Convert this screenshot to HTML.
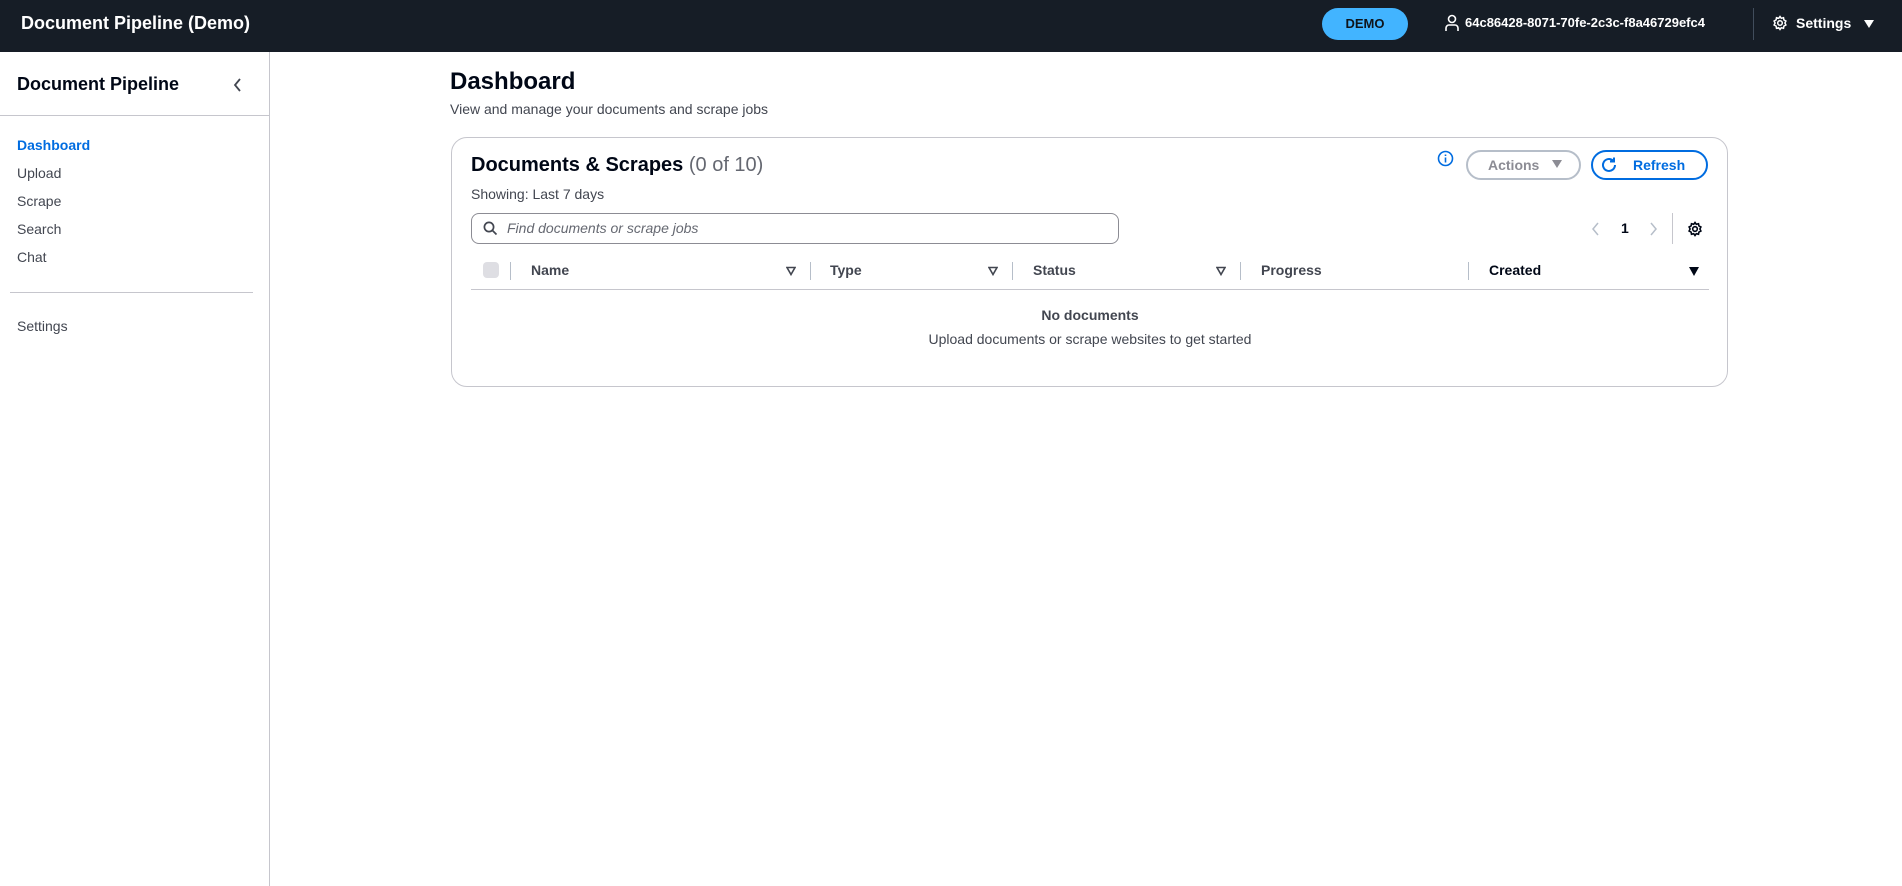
<!DOCTYPE html>
<html><head><meta charset="utf-8"><style>
*{box-sizing:border-box;margin:0;padding:0}
body{width:1902px;height:886px;overflow:hidden;background:#fff;font-family:"Liberation Sans",sans-serif;font-size:14px;color:#000716;position:relative}
.a{position:absolute;white-space:nowrap}
.top{position:absolute;left:0;top:0;width:1902px;height:52px;background:#161d26}
.hd{font-weight:bold}
.sep{position:absolute;width:1px;height:18px;background:#b6bec9;top:262px}
.tri{position:absolute;top:266px;width:0;height:0;border-left:5px solid transparent;border-right:5px solid transparent;border-top:8px solid #424650}
.tri.o{border-top-color:#424650}
</style></head><body>
<div class="top"></div>
<div class="a hd" style="left:21px;top:13px;font-size:18px;color:#fff">Document Pipeline (Demo)</div>
<div class="a" style="left:1322px;top:8px;width:86px;height:32px;border-radius:16px;background:#42b4ff;color:#0f141a;font-weight:bold;font-size:13px;text-align:center;line-height:32px">DEMO</div>
<svg class="a" style="left:1444px;top:14px" width="16" height="18" viewBox="0 0 16 18" fill="none" stroke="#fff" stroke-width="1.6"><circle cx="8" cy="5" r="3.5"/><path d="M2 17v-3a3 3 0 0 1 3-3h6a3 3 0 0 1 3 3v3"/></svg>
<div class="a hd" style="left:1465px;top:15px;font-size:13px;color:#fff">64c86428-8071-70fe-2c3c-f8a46729efc4</div>
<div class="a" style="left:1753px;top:8px;width:1px;height:32px;background:#414d5c"></div>
<svg class="a" style="left:1772px;top:15px" width="16" height="16" viewBox="0 0 16 16" fill="none" stroke="#fff" stroke-width="1.5"><circle cx="8" cy="8" r="2.3"/><path d="M8 1.5l1.3 1.8 2.2-.6.4 2.2 2 1.1-1 2 1 2-2 1.1-.4 2.2-2.2-.6L8 14.5l-1.3-1.8-2.2.6-.4-2.2-2-1.1 1-2-1-2 2-1.1.4-2.2 2.2.6z"/></svg>
<div class="a hd" style="left:1796px;top:15px;font-size:14px;color:#fff">Settings</div>
<div class="a" style="left:1864px;top:20px;border-left:5px solid transparent;border-right:5px solid transparent;border-top:8px solid #fff"></div>

<div class="a" style="left:269px;top:52px;width:1px;height:834px;background:#c6c6cd"></div>
<div class="a hd" style="left:17px;top:74px;font-size:18px">Document Pipeline</div>
<svg class="a" style="left:233px;top:77px" width="10" height="16" viewBox="0 0 10 16" fill="none" stroke="#424650" stroke-width="1.8"><path d="M7 2L2 8l5 6"/></svg>
<div class="a" style="left:0;top:115px;width:269px;height:1px;background:#c6c6cd"></div>
<div class="a hd" style="left:17px;top:137px;color:#006ce0">Dashboard</div>
<div class="a" style="left:17px;top:165px;color:#424650">Upload</div>
<div class="a" style="left:17px;top:193px;color:#424650">Scrape</div>
<div class="a" style="left:17px;top:221px;color:#424650">Search</div>
<div class="a" style="left:17px;top:249px;color:#424650">Chat</div>
<div class="a" style="left:10px;top:292px;width:243px;height:1px;background:#c6c6cd"></div>
<div class="a" style="left:17px;top:318px;color:#424650">Settings</div>

<div class="a hd" style="left:450px;top:68px;font-size:24px">Dashboard</div>
<div class="a" style="left:450px;top:101px;color:#424650">View and manage your documents and scrape jobs</div>

<div class="a" style="left:451px;top:137px;width:1277px;height:250px;border:1px solid #c6c6cd;border-radius:16px"></div>
<div class="a" style="left:471px;top:154px;font-size:20px"><b>Documents &amp; Scrapes</b> <span style="color:#656871">(0 of 10)</span></div>
<div class="a" style="left:471px;top:186px;color:#424650">Showing: Last 7 days</div>
<svg class="a" style="left:1437px;top:150px" width="17" height="17" viewBox="0 0 17 17" fill="none" stroke="#006ce0" stroke-width="1.6"><circle cx="8.5" cy="8.5" r="7"/><path d="M8.5 7.5v5M8.5 4.5v1.5"/></svg>
<div class="a" style="left:1466px;top:150px;width:115px;height:30px;border:2px solid #b6bec9;border-radius:16px;color:#8c8c94;font-weight:bold;line-height:26px;padding-left:20px">Actions</div>
<div class="a" style="left:1552px;top:160px;border-left:5px solid transparent;border-right:5px solid transparent;border-top:8px solid #8c8c94"></div>
<div class="a" style="left:1591px;top:150px;width:117px;height:30px;border:2px solid #006ce0;border-radius:16px;color:#006ce0;font-weight:bold;line-height:26px;padding-left:40px">Refresh</div>
<svg class="a" style="left:1600px;top:156px" width="18" height="18" viewBox="0 0 18 18" fill="none" stroke="#006ce0" stroke-width="2"><path d="M15 9a6 6 0 1 1-2-4.5"/><path d="M14 1.5v4h-4"/></svg>

<div class="a" style="left:471px;top:213px;width:648px;height:31px;border:1px solid #8c8c94;border-radius:8px"></div>
<svg class="a" style="left:483px;top:221px" width="15" height="15" viewBox="0 0 15 15" fill="none" stroke="#424650" stroke-width="1.7"><circle cx="6" cy="6" r="4.6"/><path d="M9.5 9.5l4 4"/></svg>
<div class="a" style="left:507px;top:220px;color:#656871;font-style:italic">Find documents or scrape jobs</div>
<svg class="a" style="left:1591px;top:221px" width="10" height="16" viewBox="0 0 10 16" fill="none" stroke="#b6bec9" stroke-width="1.5"><path d="M7 2L2 8l5 6"/></svg>
<div class="a hd" style="left:1621px;top:220px">1</div>
<svg class="a" style="left:1648px;top:221px" width="10" height="16" viewBox="0 0 10 16" fill="none" stroke="#b6bec9" stroke-width="1.5"><path d="M3 2l5 6-5 6"/></svg>
<div class="a" style="left:1672px;top:213px;width:1px;height:31px;background:#c6c6cd"></div>
<svg class="a" style="left:1687px;top:221px" width="16" height="16" viewBox="0 0 16 16" fill="none" stroke="#000716" stroke-width="1.6"><circle cx="8" cy="8" r="2.3"/><path d="M8 1.5l1.3 1.8 2.2-.6.4 2.2 2 1.1-1 2 1 2-2 1.1-.4 2.2-2.2-.6L8 14.5l-1.3-1.8-2.2.6-.4-2.2-2-1.1 1-2-1-2 2-1.1.4-2.2 2.2.6z"/></svg>

<div class="a" style="left:483px;top:262px;width:16px;height:16px;border-radius:4px;background:#dedee3"></div>
<div class="sep" style="left:510px"></div>
<div class="a hd" style="left:531px;top:262px;color:#424650">Name</div>
<svg class="a" style="left:786px;top:266px" width="10" height="10" viewBox="0 0 10 10" fill="none" stroke="#424650" stroke-width="1.6"><path d="M1 1.5h8L5 8.5z"/></svg>
<div class="sep" style="left:810px"></div>
<div class="a hd" style="left:830px;top:262px;color:#424650">Type</div>
<svg class="a" style="left:988px;top:266px" width="10" height="10" viewBox="0 0 10 10" fill="none" stroke="#424650" stroke-width="1.6"><path d="M1 1.5h8L5 8.5z"/></svg>
<div class="sep" style="left:1012px"></div>
<div class="a hd" style="left:1033px;top:262px;color:#424650">Status</div>
<svg class="a" style="left:1216px;top:266px" width="10" height="10" viewBox="0 0 10 10" fill="none" stroke="#424650" stroke-width="1.6"><path d="M1 1.5h8L5 8.5z"/></svg>
<div class="sep" style="left:1240px"></div>
<div class="a hd" style="left:1261px;top:262px;color:#424650">Progress</div>
<div class="sep" style="left:1468px"></div>
<div class="a hd" style="left:1489px;top:262px">Created</div>
<div class="a" style="left:1689px;top:267px;border-left:5px solid transparent;border-right:5px solid transparent;border-top:9px solid #000716"></div>
<div class="a" style="left:471px;top:289px;width:1238px;height:1px;background:#c6c6cd"></div>

<div class="a hd" style="left:471px;width:1238px;text-align:center;top:307px;color:#424650">No documents</div>
<div class="a" style="left:471px;width:1238px;text-align:center;top:331px;color:#424650">Upload documents or scrape websites to get started</div>
</body></html>
